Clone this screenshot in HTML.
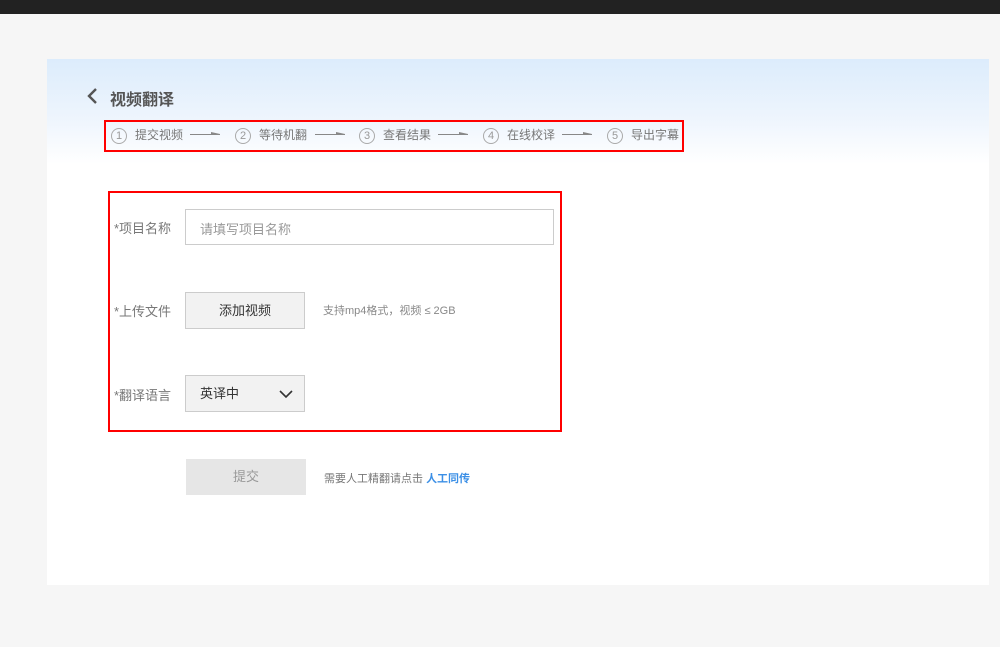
<!DOCTYPE html>
<html><head><meta charset="utf-8"><style>
*{margin:0;padding:0;box-sizing:border-box}
body{width:1000px;height:647px;background:#f6f6f6;font-family:"Liberation Sans","Noto Sans CJK SC",sans-serif;position:relative;overflow:hidden}
.top{position:absolute;left:0;top:0;width:1000px;height:14px;background:#222}
.card{position:absolute;left:47px;top:59px;width:942px;height:526px;background:linear-gradient(#dcecfc 0,#eef5fd 60px,#fff 105px,#fff)}
.abs{position:absolute}
.title{left:110px;top:86px;font-size:16px;font-weight:bold;color:#555}
.red{border:2px solid #f00}
.step{font-size:12px;color:#777;top:126px}
.c{display:inline-block;width:16px;height:16px;border:1px solid #aaa;border-radius:50%;text-align:center;line-height:14px;font-size:11px;color:#999;margin-right:8px;vertical-align:middle}
.arr{top:134px;width:30px;height:1px;background:#888}
.arr:after{content:"";position:absolute;right:0;top:-2px;border-left:9px solid #888;border-top:2px solid transparent}
.lab{font-size:13px;color:#777}
.box{border:1px solid #ccc;background:#f2f2f2;font-size:13px;color:#333;text-align:center}
</style></head><body>
<div class="top"></div>
<div class="card"></div>
<svg class="abs" style="left:86px;top:87px" width="14" height="18"><path d="M10 2 L3 9 L10 16" stroke="#555" stroke-width="2.4" fill="none"/></svg>
<div class="abs title">视频翻译</div>
<div class="abs red" style="left:104px;top:120px;width:580px;height:32px"></div>
<div class="abs step" style="left:111px"><span class="c">1</span>提交视频</div>
<div class="abs arr" style="left:190px"></div>
<div class="abs step" style="left:235px"><span class="c">2</span>等待机翻</div>
<div class="abs arr" style="left:315px"></div>
<div class="abs step" style="left:359px"><span class="c">3</span>查看结果</div>
<div class="abs arr" style="left:438px"></div>
<div class="abs step" style="left:483px"><span class="c">4</span>在线校译</div>
<div class="abs arr" style="left:562px"></div>
<div class="abs step" style="left:607px"><span class="c">5</span>导出字幕</div>
<div class="abs red" style="left:108px;top:191px;width:454px;height:241px"></div>
<div class="abs lab" style="left:114px;top:218px">*项目名称</div>
<div class="abs" style="left:185px;top:209px;width:369px;height:36px;border:1px solid #ccc;background:#fff;font-size:13px;color:#999;padding:9px 14px">请填写项目名称</div>
<div class="abs lab" style="left:114px;top:301px">*上传文件</div>
<div class="abs box" style="left:185px;top:292px;width:120px;height:37px;line-height:35px">添加视频</div>
<div class="abs" style="left:323px;top:302px;font-size:11px;color:#888">支持mp4格式，视频 ≤ 2GB</div>
<div class="abs lab" style="left:114px;top:385px">*翻译语言</div>
<div class="abs box" style="left:185px;top:375px;width:120px;height:37px;line-height:35px;text-align:left;padding-left:14px">英译中</div>
<svg class="abs" style="left:278px;top:389px" width="16" height="10"><path d="M2 2 L8 8 L14 2" stroke="#333" stroke-width="1.6" fill="none"/></svg>
<div class="abs" style="left:186px;top:459px;width:120px;height:36px;background:#e6e6e6;line-height:36px;text-align:center;font-size:13px;color:#999">提交</div>
<div class="abs" style="left:324px;top:470px;font-size:11px;color:#777">需要人工精翻请点击 <b style="color:#3b8fe6">人工同传</b></div>
</body></html>
